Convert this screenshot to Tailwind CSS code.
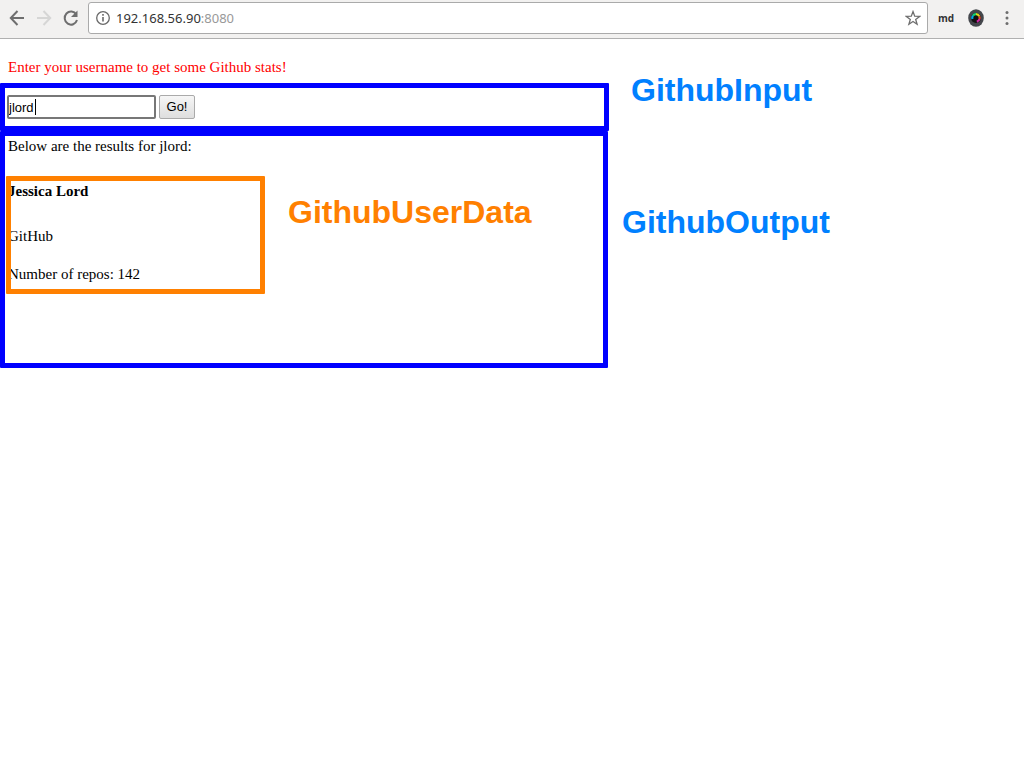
<!DOCTYPE html>
<html lang="en">
<head>
<meta charset="utf-8">
<title>Github stats</title>
<script src="https://cdn.jsdelivr.net/npm/@tailwindcss/browser@4"></script>
</head>
<body class="min-h-screen bg-white font-['Liberation_Serif',serif] text-[15px] leading-5 text-black">
<header class="flex h-[39px] items-center border-b border-[#b0b0b0] bg-[#f2f1f0] pb-[3px] font-['Open_Sans',sans-serif]">
  <nav class="flex w-[88px] shrink-0 items-center gap-[9px] pl-2">
    <button aria-label="Back" class="size-[18px]"><svg viewBox="0 0 18 18" class="size-[18px]" fill="none" stroke="#6e6e6e" stroke-width="2"><path d="M16 9H3M9.500 2L2.800 9l6.700 7"/></svg></button>
    <button aria-label="Forward" class="size-[18px]"><svg viewBox="0 0 18 18" class="size-[18px]" fill="none" stroke="#d6d6d5" stroke-width="2"><path d="M2 9h13M8.500 2L15.200 9l-6.700 7"/></svg></button>
    <button aria-label="Reload" class="size-[18px]"><svg viewBox="0 0 18 18" class="size-[18px]" fill="none" stroke="#6e6e6e" stroke-width="2"><path d="M14.300 5.500A6.300 6.600 0 1 0 15 11"/><path d="M15.500 1.500v6.500H9z" fill="#6e6e6e" stroke="none"/></svg></button>
  </nav>
  <div class="flex h-8 min-w-0 flex-1 items-center rounded-[3px] border border-[#aaa] bg-white px-[6px]">
    <svg viewBox="0 0 16 16" class="size-4 shrink-0" fill="none" stroke="#696969"><circle cx="8" cy="8" r="6.300" stroke-width="1.300"/><path d="M8 7v4.500M8 4v1.700" stroke-width="1.600"/></svg>
    <p class="ml-[5px] flex-1 font-['Noto_Sans',sans-serif] text-[13px] text-[#333]">192.168.56.90<span class="text-[#999]">:8080</span></p>
    <button aria-label="Bookmark" class="size-4"><svg viewBox="0 0 16 16" class="size-4" fill="none" stroke="#6e6e6e" stroke-width="1.300"><path d="M8 1.600l1.700 4.600 4.900.2-3.900 3 1.400 4.800L8 11.500l-4.100 2.700 1.400-4.800-3.900-3 4.900-.2z"/></svg></button>
  </div>
  <div class="flex shrink-0 items-center pr-[9px]">
    <button class="ml-[10px] w-4 text-[10px] leading-4 font-bold text-[#333]">md</button>
    <button aria-label="Color picker" class="ml-[13px] size-[18px]"><svg viewBox="0 0 18 18" class="size-[18px]" fill="none"><ellipse cx="9" cy="9" rx="7.800" ry="8.800" fill="#44474c"/><circle cx="9" cy="9" r="5" fill="#111"/><g stroke-width="2.200"><path d="M5.400 10A3.700 3.700 0 0 1 6 6.700" stroke="#00a9e8"/><path d="M6 6.700A3.700 3.700 0 0 1 9 5.200" stroke="#16d574"/><path d="M9 5.200A3.700 3.700 0 0 1 12.200 7.200" stroke="#d7dc22"/><path d="M12.200 7.200a3.700 3.700 0 0 1 .3 2.800" stroke="#ef542c"/><path d="M12.500 10a3.700 3.700 0 0 1-2.700 2.600" stroke="#d526a9"/></g></svg></button>
    <button aria-label="Menu" class="ml-[14px] size-4"><svg viewBox="0 0 16 16" class="size-4" fill="#6e6e6e"><circle cx="8" cy="2.500" r="1.500"/><circle cx="8" cy="8" r="1.500"/><circle cx="8" cy="13.500" r="1.500"/></svg></button>
  </div>
</header>
<main>
  <p class="px-2 pt-[18px] pb-[6px] text-[#f00]">Enter your username to get some Github stats!</p>
  <section class="flex items-start">
    <form class="flex h-12 w-[609px] items-center gap-[3px] rounded-[1px] border-5 border-[#00f] pl-[2px] font-['Liberation_Sans',sans-serif]" onsubmit="return false">
      <div class="relative flex">
        <input aria-label="Username" value="jlord" class="h-6 w-[149px] rounded-[2px] border-2 border-[#777] bg-white text-[13px] text-black outline-none">
        <span class="absolute top-1 left-7 h-4 w-px bg-black"></span>
      </div>
      <button class="h-6 w-9 rounded-[2px] border border-[#aaa] bg-linear-to-b from-[#f6f6f6] to-[#dedede] text-[13px] leading-5">Go!</button>
    </form>
    <h2 class="-mt-[11px] ml-[22px] font-['Liberation_Sans',sans-serif] text-[32px] leading-9 font-bold text-[#0080ff]">GithubInput</h2>
  </section>
  <section class="flex items-start">
    <div class="h-[237px] w-[608px] rounded-[1px] border-5 border-[#00f]">
      <p class="px-[3px]">Below are the results for jlord:</p>
      <div class="ml-px flex items-start gap-[23px] pt-5">
        <article class="relative h-[118px] w-[259px] px-[2px] pt-[5px]">
          <h3 class="font-bold">Jessica Lord</h3>
          <p class="mt-[25px]">GitHub</p>
          <p class="mt-[18px]">Number of repos: 142</p>
          <div class="absolute inset-0 rounded-[1px] border-5 border-[#ff8000]"></div>
        </article>
        <h2 class="mt-[18px] font-['Liberation_Sans',sans-serif] text-[32px] leading-9 font-bold text-[#ff8000]">GithubUserData</h2>
      </div>
    </div>
    <h2 class="mt-[73px] ml-[14px] font-['Liberation_Sans',sans-serif] text-[32px] leading-9 font-bold text-[#0080ff]">GithubOutput</h2>
  </section>
</main>
</body>
</html>
